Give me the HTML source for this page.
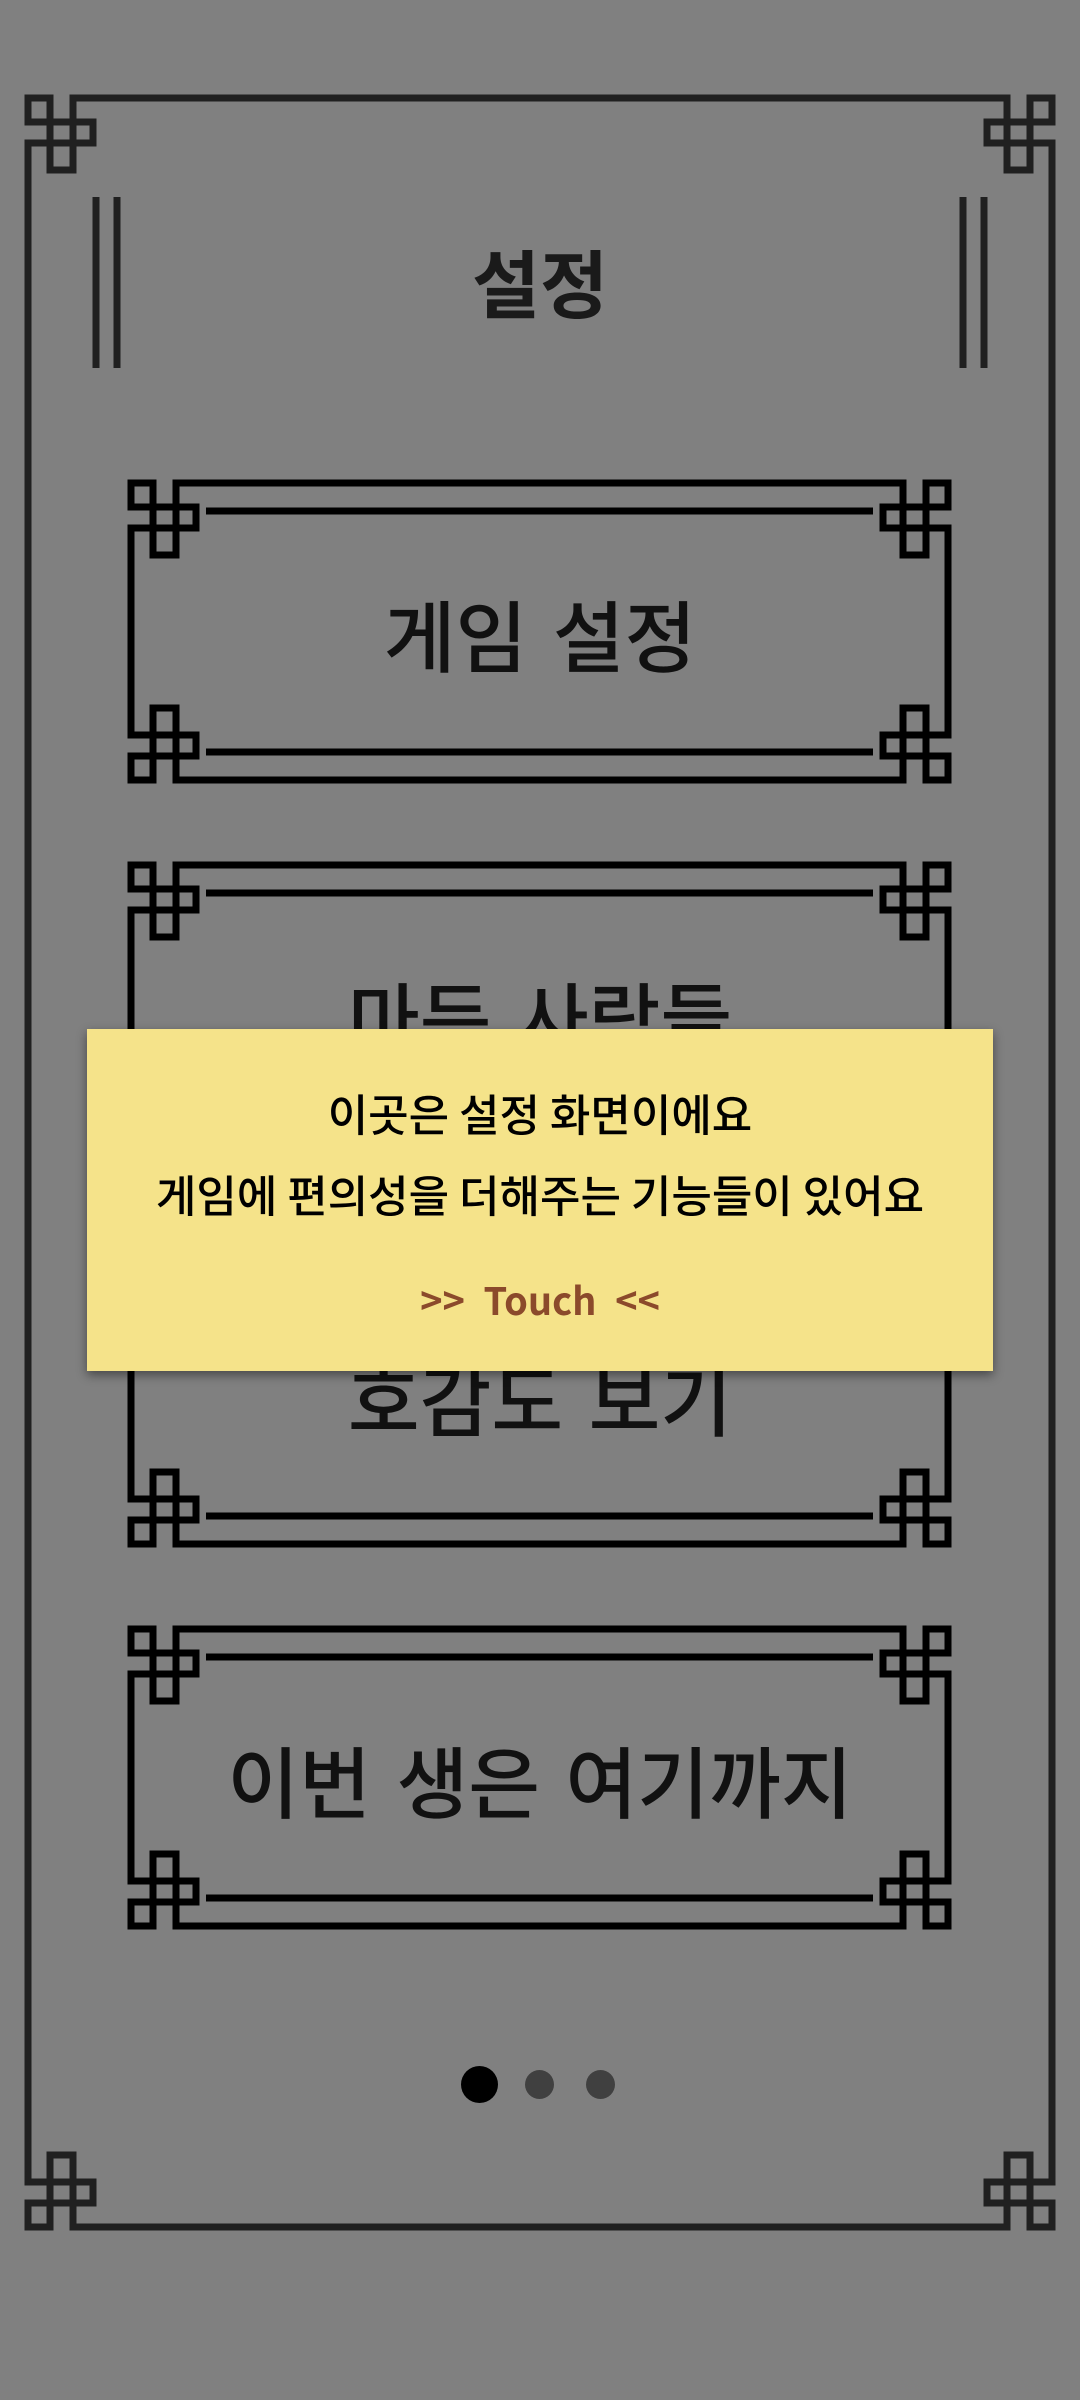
<!DOCTYPE html>
<html><head><meta charset="utf-8">
<style>
html,body{margin:0;padding:0;}
body{width:1080px;height:2400px;background:#808080;position:relative;overflow:hidden;font-family:"Noto Sans CJK KR",sans-serif;}
svg{position:absolute;left:0;top:0;}
.t{position:absolute;left:0;width:1080px;text-align:center;color:#111;font-weight:500;word-spacing:8px;}
.pop{position:absolute;left:87px;top:1029px;width:906px;height:342px;background:#f5e38a;box-shadow:0 4px 10px rgba(0,0,0,0.45);}
.pop div{position:absolute;left:0;width:100%;text-align:center;}
.dot{position:absolute;border-radius:50%;}
</style></head><body>
<svg width="1080" height="2400" viewBox="0 0 1080 2400">
<defs>
<path id="k" d="M0,24 V0 H22 V72 H45 V0 M0,45 H65 V24 H0" fill="none" stroke-linecap="square"/>
</defs>
<g stroke="#202020" stroke-width="7" fill="none">
<use href="#k" transform="translate(28,98)"/>
<use href="#k" transform="translate(1052,98) scale(-1,1)"/>
<use href="#k" transform="translate(28,2227) scale(1,-1)"/>
<use href="#k" transform="translate(1052,2227) scale(-1,-1)"/>
<path d="M73,98 H1007 M28,143 V2182 M1052,143 V2182 M73,2227 H1007"/>
<path d="M96,197 V368 M117,197 V368 M984,197 V368 M963,197 V368"/>
</g>
<g stroke="#000" stroke-width="7" fill="none">
<g transform="translate(0,0)">
<use href="#k" transform="translate(131,483)"/><use href="#k" transform="translate(948,483) scale(-1,1)"/>
<use href="#k" transform="translate(131,780) scale(1,-1)"/><use href="#k" transform="translate(948,780) scale(-1,-1)"/>
<path d="M176,483 H903 M131,528 V735 M948,528 V735 M176,780 H903 M206,511 H873 M206,752 H873"/>
</g>
<g transform="translate(0,382)">
<use href="#k" transform="translate(131,483)"/><use href="#k" transform="translate(948,483) scale(-1,1)"/>
<use href="#k" transform="translate(131,780) scale(1,-1)"/><use href="#k" transform="translate(948,780) scale(-1,-1)"/>
<path d="M176,483 H903 M131,528 V735 M948,528 V735 M176,780 H903 M206,511 H873 M206,752 H873"/>
</g>
<g transform="translate(0,764)">
<use href="#k" transform="translate(131,483)"/><use href="#k" transform="translate(948,483) scale(-1,1)"/>
<use href="#k" transform="translate(131,780) scale(1,-1)"/><use href="#k" transform="translate(948,780) scale(-1,-1)"/>
<path d="M176,483 H903 M131,528 V735 M948,528 V735 M176,780 H903 M206,511 H873 M206,752 H873"/>
</g>
<g transform="translate(0,1146)">
<use href="#k" transform="translate(131,483)"/><use href="#k" transform="translate(948,483) scale(-1,1)"/>
<use href="#k" transform="translate(131,780) scale(1,-1)"/><use href="#k" transform="translate(948,780) scale(-1,-1)"/>
<path d="M176,483 H903 M131,528 V735 M948,528 V735 M176,780 H903 M206,511 H873 M206,752 H873"/>
</g>
</g>
</svg>
<div class="t" style="top:231px;font-size:74px;font-weight:bold;line-height:100px;color:#1a1a1a;word-spacing:0;">설정</div>
<div class="t" style="top:578px;font-size:78px;line-height:110px;">게임 설정</div>
<div class="t" style="top:960px;font-size:78px;line-height:110px;">마든 사람들</div>
<div class="t" style="top:1342px;font-size:78px;line-height:110px;">호감도 보기</div>
<div class="t" style="top:1724px;font-size:78px;line-height:110px;">이번 생은 여기까지</div>
<div class="pop">
<div style="top:51px;font-size:44px;line-height:64px;color:#000;font-weight:500;">이곳은 설정 화면이에요</div>
<div style="top:132px;font-size:44px;line-height:64px;color:#000;font-weight:500;">게임에 편의성을 더해주는 기능들이 있어요</div>
<div style="top:242px;font-size:38px;line-height:56px;color:#8b4a2b;font-weight:bold;word-spacing:10px;">&gt;&gt; Touch &lt;&lt;</div>
</div>
<div class="dot" style="left:461px;top:2066px;width:37px;height:37px;background:#000;"></div>
<div class="dot" style="left:525px;top:2070px;width:29px;height:29px;background:#404040;"></div>
<div class="dot" style="left:586px;top:2070px;width:29px;height:29px;background:#404040;"></div>
</body></html>
